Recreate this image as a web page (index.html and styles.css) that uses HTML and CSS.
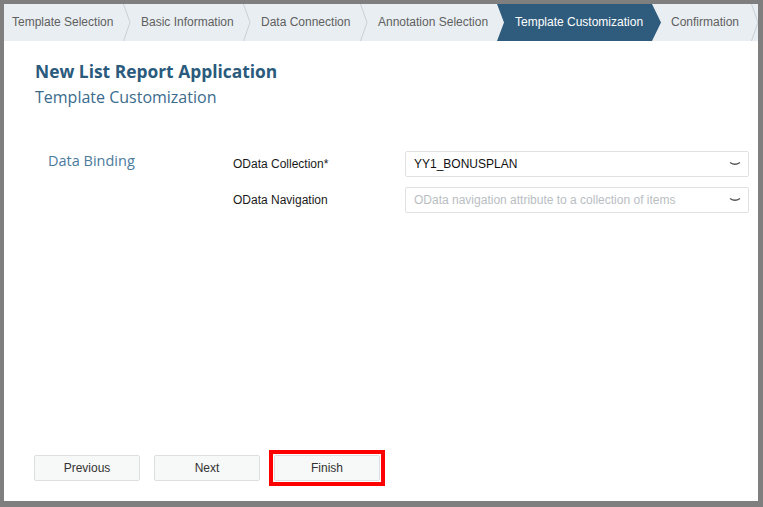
FILE: index.html
```html
<!DOCTYPE html>
<html>
<head>
<meta charset="utf-8">
<link rel="stylesheet" href="styles.css">
</head>
<body>
<div class="frame">
  <div class="steps">
    <div class="step s1">Template Selection</div>
    <svg class="sep" width="8" height="37" viewBox="0 0 8 37"><polyline points="0.5,0 7,18.5 0.5,37" fill="none" stroke="#c9cfd5" stroke-width="1"/></svg>
    <div class="step s2">Basic Information</div>
    <svg class="sep" width="8" height="37" viewBox="0 0 8 37"><polyline points="0.5,0 7,18.5 0.5,37" fill="none" stroke="#c9cfd5" stroke-width="1"/></svg>
    <div class="step s3">Data Connection</div>
    <svg class="sep" width="8" height="37" viewBox="0 0 8 37"><polyline points="0.5,0 7,18.5 0.5,37" fill="none" stroke="#c9cfd5" stroke-width="1"/></svg>
    <div class="step s4">Annotation Selection</div>
    <div class="step active">Template Customization</div>
    <div class="step s6">Confirmation</div>
    <svg class="sep" width="8" height="37" viewBox="0 0 8 37"><polyline points="0.5,0 7,18.5 0.5,37" fill="none" stroke="#c9cfd5" stroke-width="1"/></svg>
  </div>
  <div class="content">
    <div class="titles">
      <div class="title">New List Report Application</div>
      <div class="subtitle">Template Customization</div>
    </div>
    <div class="form">
      <div class="section">Data Binding</div>
      <div class="fields">
        <div class="row">
          <div class="label">OData Collection*</div>
          <div class="select">
            <span class="value">YY1_BONUSPLAN</span>
            <svg class="caret" width="12" height="6" viewBox="0 0 12 6"><path d="M1 1.5 Q6 5 11 1.5" fill="none" stroke="#555" stroke-width="1.3"/></svg>
          </div>
        </div>
        <div class="row">
          <div class="label">OData Navigation</div>
          <div class="select">
            <span class="placeholder">OData navigation attribute to a collection of items</span>
            <svg class="caret" width="12" height="6" viewBox="0 0 12 6"><path d="M1 1.5 Q6 5 11 1.5" fill="none" stroke="#555" stroke-width="1.3"/></svg>
          </div>
        </div>
      </div>
    </div>
    <div class="buttons">
      <button class="btn">Previous</button>
      <button class="btn">Next</button>
      <div class="highlight"><button class="btn">Finish</button></div>
    </div>
  </div>
</div>
</body>
</html>
```

FILE: styles.css
```css
* { box-sizing: border-box; }
html, body { margin: 0; padding: 0; background: #fff; }
body { font-family: "Liberation Sans", Arial, sans-serif; }
.frame {
  width: 763px;
  height: 507px;
  border-style: solid;
  border-color: #7f7f7f;
  border-width: 4px 5px 6px 4px;
  display: flex;
  flex-direction: column;
  overflow: hidden;
  background: #fff;
}
.steps {
  height: 37px;
  flex: none;
  display: flex;
  align-items: stretch;
  background: #e9eef2;
  overflow: hidden;
  white-space: nowrap;
}
.step {
  flex: none;
  display: flex;
  align-items: center;
  font-size: 12px;
  color: #5f5f5f;
  padding-left: 10px;
  padding-bottom: 1px;
}
.sep { flex: none; display: block; }
.s1 { width: 119px; padding-left: 8px; }
.s2 { width: 112px; }
.s3 { width: 109px; }
.s4 { width: 129px; }
.active {
  width: 164px;
  padding-left: 18px;
  background: #2f5c7d;
  color: #fff;
  clip-path: polygon(0 0, calc(100% - 9px) 0, 100% 50%, calc(100% - 9px) 100%, 0 100%, 7px 50%);
}
.s6 { width: 90px; }
.content {
  flex: 1;
  display: flex;
  flex-direction: column;
  padding: 18px 0 15px 0;
}
.titles { padding-left: 31px; font-family: "Open Sans", "Noto Sans", sans-serif; }
.title { font-size: 17.4px; font-weight: 700; color: #2a5a7c; line-height: 24px; }
.subtitle { font-size: 16px; color: #3b6b8d; line-height: 20px; margin-top: 4px; }
.form {
  display: flex;
  margin-top: 44px;
}
.section {
  width: 229px;
  padding-left: 44px;
  font-family: "Open Sans", "Noto Sans", sans-serif;
  font-size: 14.5px;
  color: #4b7b9c;
  line-height: 20px;
}
.fields { display: flex; flex-direction: column; gap: 10px; width: 516px; }
.row { display: flex; align-items: center; height: 26px; }
.label { width: 172px; font-size: 12px; color: #1a1a1a; }
.select {
  width: 344px;
  height: 26px;
  border: 1px solid #dfe2e5;
  border-radius: 2px;
  display: flex;
  align-items: center;
  justify-content: space-between;
  padding: 0 7px 0 8px;
  font-size: 12px;
}
.value { color: #111; }
.placeholder { color: #b9bec3; }
.buttons {
  margin-top: auto;
  display: flex;
  align-items: center;
  padding-left: 30px;
  gap: 14px;
}
.btn {
  width: 106px;
  height: 26px;
  border: 1px solid #dcdfe2;
  border-radius: 2px;
  background: #f7f8f8;
  font-family: "Liberation Sans", Arial, sans-serif;
  font-size: 12px;
  color: #333;
  padding: 0;
}
.highlight {
  border: 4px solid #ff0000;
  padding: 0;
  margin-left: -5px;
  width: 116px;
  height: 36px;
  display: flex;
  align-items: center;
  justify-content: center;
}
.highlight .btn { width: 106px; }
```
